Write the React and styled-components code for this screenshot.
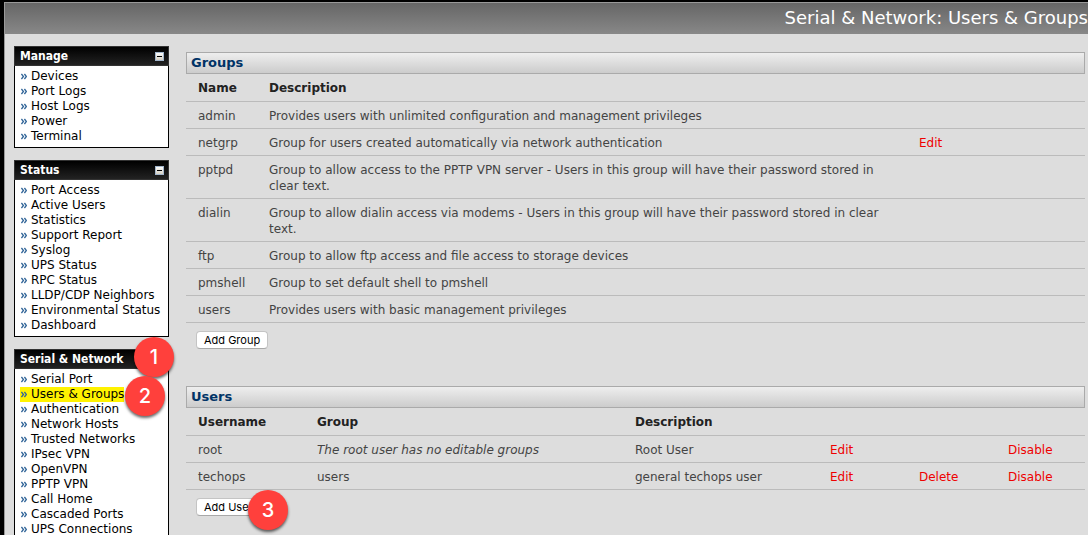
import React from 'react';
import styled, { createGlobalStyle } from 'styled-components';

const GlobalStyle = createGlobalStyle`
  *, *::before, *::after { box-sizing: border-box; }
  body {
    margin: 0;
    background: #000;
    color: #444;
    font: 12px/16px Verdana, "DejaVu Sans", sans-serif;
  }
`;

const Page = styled.div`
  height: 100vh;
  overflow: hidden;
  padding: 2px 0 0 4px;
  display: flex;
  flex-direction: column;
`;

const TitleBar = styled.header`
  flex: none;
  height: 32px;
  display: flex;
  justify-content: flex-end;
  align-items: flex-start;
  padding-top: 3px;
  overflow: hidden;
  border-top: 1px solid #999;
  border-left: 1px solid #999;
  background: linear-gradient(#666, #888);
`;

const Title = styled.h1`
  margin: 0;
  color: #fff;
  font-size: 18px;
  line-height: 24px;
  font-weight: normal;
  white-space: nowrap;
`;

const Body = styled.div`
  flex: 1 0 auto;
  display: flex;
  align-items: flex-start;
  gap: 17px;
  padding: 12px 3px 0 9px;
  border-left: 1px solid #999;
  background: #ddd;
`;

const Sidebar = styled.nav`
  flex: none;
  width: 155px;
  display: flex;
  flex-direction: column;
  gap: 12px;
`;

const MenuBox = styled.section`
  border: 1px solid #000;
  border-top: 0;
  background: #fff;
`;

const MenuHeader = styled.header`
  position: relative;
  height: 20px;
  margin: 0 -1px;
  padding: 0 4px 0 5px;
  display: flex;
  align-items: center;
  justify-content: space-between;
  border: 1px solid #333;
  background: linear-gradient(#000, #222);
`;

const MenuTitle = styled.h2`
  margin: 0;
  color: #fff;
  font-family: Tahoma, "DejaVu Sans Condensed", "DejaVu Sans", sans-serif;
  font-size: 12px;
  line-height: 18px;
`;

const CollapseButton = styled.button`
  width: 9px;
  height: 9px;
  padding: 0;
  border: 0;
  background: none;
  display: flex;
`;

const MenuList = styled.ul`
  margin: 0;
  padding: 2px 0 4px 5px;
  list-style: none;
`;

const MenuItem = styled.li`
  position: relative;
  height: 15px;
`;

const MenuLink = styled.a`
  display: inline-flex;
  align-items: center;
  gap: 4px;
  padding-left: 1px;
  color: #000;
  font-size: 12px;
  line-height: 15px;
  white-space: nowrap;
  text-decoration: none;
  background: ${(p) => (p.$marked ? '#fff200' : 'transparent')};
`;

const Main = styled.main`
  flex: 1;
  min-width: 0;
  padding-top: 6px;
  display: flex;
  flex-direction: column;
  gap: 37px;
`;

const SectionTitle = styled.h2`
  margin: 0;
  padding: 0 4px;
  border: 1px solid #aaa;
  background: linear-gradient(#eee, #ccc);
  color: #036;
  font-size: 13px;
  line-height: 20px;
`;

const Table = styled.table`
  width: 100%;
  table-layout: fixed;
  border-collapse: separate;
  border-spacing: 0;
`;

const Col = styled.col`
  width: ${(p) => (p.$w ? `${p.$w}px` : 'auto')};
`;

const HeadCell = styled.th`
  padding: 6px 12px 5px;
  border-bottom: 1px solid #bbb;
  color: #222;
  text-align: left;
`;

const Cell = styled.td`
  padding: 6px 12px 4px;
  border-bottom: 1px solid #bbb;
  vertical-align: top;
  font-style: ${(p) => (p.$italic ? 'italic' : 'normal')};
`;

const ActionLink = styled.a`
  color: #e00;
  text-decoration: none;
`;

const ButtonHolder = styled.div`
  position: relative;
  width: fit-content;
  margin: 8px 0 0 10px;
`;

const PushButton = styled.button`
  display: block;
  height: 18px;
  padding: 0 7px;
  border: 1px solid #c4c4c4;
  border-bottom-color: #a8a8a8;
  border-radius: 4px;
  background: #fff;
  color: #000;
  font: 11px/16px Inter, Roboto, sans-serif;
`;

const Badge = styled.span`
  position: absolute;
  z-index: 1;
  left: ${(p) => p.$left}px;
  top: ${(p) => p.$top}px;
  width: 40px;
  height: 40px;
  border-radius: 50%;
  background: #ff403c;
  box-shadow: 0 2px 3px rgba(0, 0, 0, 0.6);
  color: #fff;
  font: 500 20px/40px Inter, "Liberation Sans", sans-serif;
  text-align: center;
`;

const Chevrons = () => (
  <svg width="6" height="7" viewBox="0 0 6 7" fill="none" stroke="#369" strokeWidth="1.4" aria-hidden="true">
    <path d="M0.4 1 L2.4 3.5 L0.4 6 M3.4 1 L5.4 3.5 L3.4 6" />
  </svg>
);

const Minus = () => (
  <svg width="9" height="9" viewBox="0 0 9 9" aria-hidden="true">
    <defs>
      <linearGradient id="minusFace" x1="0" y1="0" x2="0" y2="1">
        <stop offset="0" stopColor="#fff" />
        <stop offset="1" stopColor="#d2cdc0" />
      </linearGradient>
    </defs>
    <rect x="0.5" y="0.5" width="8" height="8" fill="url(#minusFace)" stroke="#a3b6cc" />
    <rect x="2" y="4" width="5" height="1" fill="#000" />
  </svg>
);

const menus = [
  { title: 'Manage', items: ['Devices', 'Port Logs', 'Host Logs', 'Power', 'Terminal'] },
  {
    title: 'Status',
    items: ['Port Access', 'Active Users', 'Statistics', 'Support Report', 'Syslog', 'UPS Status',
      'RPC Status', 'LLDP/CDP Neighbors', 'Environmental Status', 'Dashboard'],
  },
  {
    title: 'Serial & Network',
    step: 1,
    items: ['Serial Port', 'Users & Groups', 'Authentication', 'Network Hosts', 'Trusted Networks',
      'IPsec VPN', 'OpenVPN', 'PPTP VPN', 'Call Home', 'Cascaded Ports', 'UPS Connections'],
  },
];

const groups = [
  ['admin', 'Provides users with unlimited configuration and management privileges'],
  ['netgrp', 'Group for users created automatically via network authentication', 'Edit'],
  ['pptpd', 'Group to allow access to the PPTP VPN server - Users in this group will have their password stored in clear text.'],
  ['dialin', 'Group to allow dialin access via modems - Users in this group will have their password stored in clear text.'],
  ['ftp', 'Group to allow ftp access and file access to storage devices'],
  ['pmshell', 'Group to set default shell to pmshell'],
  ['users', 'Provides users with basic management privileges'],
];

const users = [
  { name: 'root', group: 'The root user has no editable groups', locked: true, description: 'Root User', actions: ['Edit', '', 'Disable'] },
  { name: 'techops', group: 'users', description: 'general techops user', actions: ['Edit', 'Delete', 'Disable'] },
];

function Menu({ title, items, step }) {
  return (
    <MenuBox>
      <MenuHeader>
        <MenuTitle>{title}</MenuTitle>
        <CollapseButton type="button" aria-label={`Collapse ${title}`}><Minus /></CollapseButton>
        {step && <Badge $left={119} $top={-13}>{step}</Badge>}
      </MenuHeader>
      <MenuList>
        {items.map((item) => {
          const current = item === 'Users & Groups';
          return (
            <MenuItem key={item}>
              <MenuLink href="#" $marked={current}><Chevrons />{item}</MenuLink>
              {current && <Badge $left={105} $top={-10}>2</Badge>}
            </MenuItem>
          );
        })}
      </MenuList>
    </MenuBox>
  );
}

const Action = ({ label }) => <Cell>{label && <ActionLink href="#">{label}</ActionLink>}</Cell>;

export default function App() {
  return (
    <>
      <GlobalStyle />
      <Page>
        <TitleBar><Title>Serial &amp; Network: Users &amp; Groups</Title></TitleBar>
        <Body>
          <Sidebar>{menus.map((m) => <Menu key={m.title} {...m} />)}</Sidebar>
          <Main>
            <section>
              <SectionTitle>Groups</SectionTitle>
              <Table>
                <colgroup><Col $w={71} /><Col /><Col $w={89} /><Col $w={89} /></colgroup>
                <thead>
                  <tr><HeadCell>Name</HeadCell><HeadCell>Description</HeadCell><HeadCell /><HeadCell /></tr>
                </thead>
                <tbody>
                  {groups.map(([name, description, action]) => (
                    <tr key={name}>
                      <Cell>{name}</Cell><Cell>{description}</Cell><Action label={action} /><Cell />
                    </tr>
                  ))}
                </tbody>
              </Table>
              <ButtonHolder><PushButton type="button">Add Group</PushButton></ButtonHolder>
            </section>
            <section>
              <SectionTitle>Users</SectionTitle>
              <Table>
                <colgroup>
                  <Col $w={119} /><Col /><Col $w={195} /><Col $w={89} /><Col $w={89} /><Col $w={89} />
                </colgroup>
                <thead>
                  <tr>
                    <HeadCell>Username</HeadCell><HeadCell>Group</HeadCell><HeadCell>Description</HeadCell>
                    <HeadCell /><HeadCell /><HeadCell />
                  </tr>
                </thead>
                <tbody>
                  {users.map((u) => (
                    <tr key={u.name}>
                      <Cell>{u.name}</Cell><Cell $italic={u.locked}>{u.group}</Cell><Cell>{u.description}</Cell>
                      {u.actions.map((a, i) => <Action key={i} label={a} />)}
                    </tr>
                  ))}
                </tbody>
              </Table>
              <ButtonHolder>
                <PushButton type="button">Add User</PushButton>
                <Badge $left={52} $top={-8}>3</Badge>
              </ButtonHolder>
            </section>
          </Main>
        </Body>
      </Page>
    </>
  );
}
